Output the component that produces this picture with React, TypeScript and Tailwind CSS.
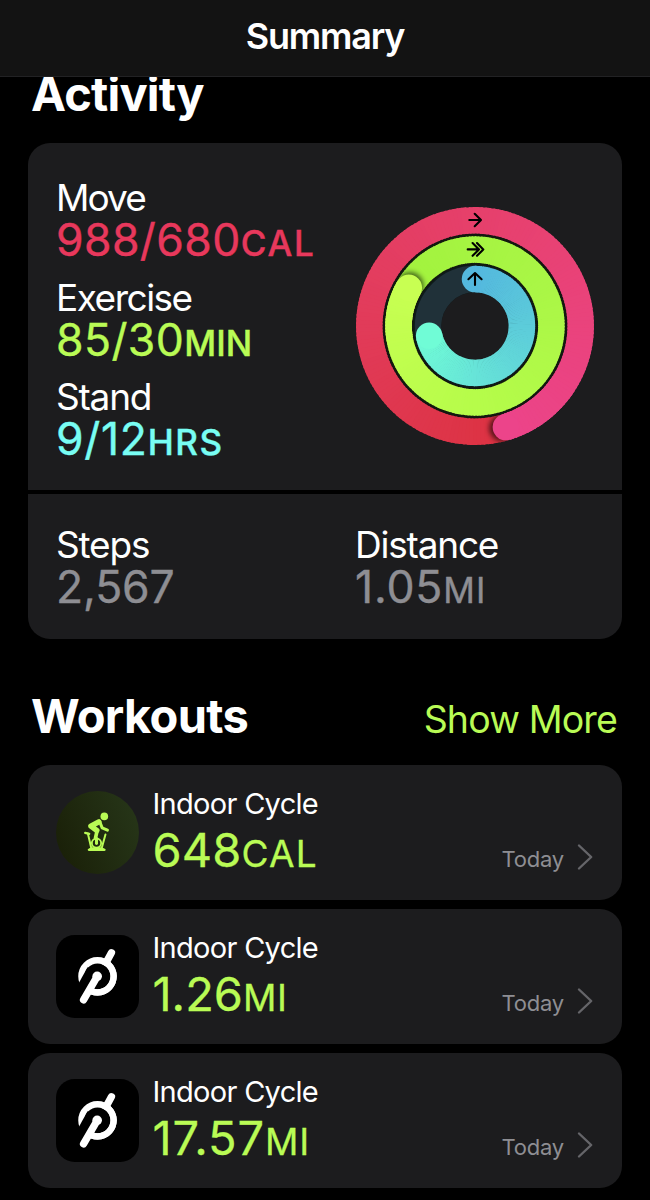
import React from "react";

const CARD = "bg-[#1c1c1e]";

type RGB = [number, number, number];

function point(radius: number, degrees: number): [number, number] {
  const a = (degrees * Math.PI) / 180;
  return [radius * Math.sin(a), -radius * Math.cos(a)];
}

function mix(stops: RGB[], t: number): string {
  const p = Math.min(Math.max(t, 0), 1) * (stops.length - 1);
  const i = Math.min(Math.floor(p), stops.length - 2);
  const f = p - i;
  const c = stops[i].map((v, k) => Math.round(v + (stops[i + 1][k] - v) * f));
  return `rgb(${c[0]},${c[1]},${c[2]})`;
}

interface RingProps {
  id: string;
  radius: number;
  from: number;
  sweep: number;
  stops: RGB[];
  roundStart?: boolean;
}

const WIDTH = 26.5;

function Ring({ id, radius, from, sweep, stops, roundStart }: RingProps) {
  const step = 2;
  const arcs = Array.from({ length: Math.round(sweep / step) }, (_, i) => {
    const a = from + i * step;
    const [x1, y1] = point(radius, a);
    const [x2, y2] = point(radius, a + step + (i * step + step < sweep ? 0.8 : 0));
    return (
      <path
        key={i}
        d={`M${x1} ${y1}A${radius} ${radius} 0 0 1 ${x2} ${y2}`}
        stroke={mix(stops, (i * step) / sweep)}
        strokeWidth={WIDTH}
        fill="none"
      />
    );
  });
  const [hx, hy] = point(radius, from + sweep);
  const [sx, sy] = point(radius, from + sweep + 2);
  const [tx, ty] = point(radius, from);
  const outer = radius + WIDTH / 2;
  const inner = radius - WIDTH / 2;
  return (
    <g>
      <clipPath id={id}>
        <path
          clipRule="evenodd"
          d={`M0 ${-outer}A${outer} ${outer} 0 1 1 0 ${outer}A${outer} ${outer} 0 1 1 0 ${-outer}ZM0 ${-inner}A${inner} ${inner} 0 1 1 0 ${inner}A${inner} ${inner} 0 1 1 0 ${-inner}Z`}
        />
      </clipPath>
      {roundStart && <circle cx={tx} cy={ty} r={WIDTH / 2} fill={mix(stops, 0)} />}
      {arcs}
      {!roundStart && (
        <g clipPath={`url(#${id})`}>
          <circle cx={sx} cy={sy} r={WIDTH / 2} fill="#000" opacity="0.6" filter="url(#soft)" />
        </g>
      )}
      {!roundStart && arcs.slice(-20)}
      <circle cx={hx} cy={hy} r={WIDTH / 2} fill={mix(stops, 1)} />
    </g>
  );
}

function Rings() {
  return (
    <svg viewBox="-120 -120 240 240" className="h-[240px] w-[240px]">
      <defs>
        <filter id="soft" x="-50%" y="-50%" width="200%" height="200%">
          <feGaussianBlur stdDeviation="2.6" />
        </filter>
      </defs>
      <circle r="95" fill="#191317" />
      <circle r="76.4" fill="none" stroke="#12190f" strokeWidth="31" />
      <circle r="47" fill="none" stroke="#0e1b1b" strokeWidth="29" />
      <circle r="46.9" fill="none" stroke="#203139" strokeWidth={WIDTH} />
      <circle r="33.7" fill="#1c1c1e" />
      <Ring id="move" radius={105.7} from={163} sweep={360} stops={[[220, 50, 66], [226, 60, 92], [232, 66, 116], [236, 68, 138]]} />
      <Ring id="exercise" radius={76.4} from={300} sweep={360} stops={[[162, 242, 62], [170, 246, 70], [182, 252, 74], [200, 255, 82]]} />
      <Ring id="stand" radius={46.9} from={0} sweep={258} roundStart stops={[[84, 184, 222], [92, 203, 218], [102, 226, 216], [112, 252, 214]]} />
      <g fill="none" stroke="#000" strokeWidth="2.1" strokeLinecap="round" strokeLinejoin="round">
        <path d="M-5.7-106H5.8M-.3-112.2L6-106L-.3-99.8" />
        <path d="M-7.3-76.6H4M-2.4-83L4-76.6L-2.4-70.2M2-83L8.3-76.6L2-70.2" />
        <path d="M0-41V-52.8M-6.6-46.8L0-53L6.6-46.8" />
      </g>
    </svg>
  );
}

interface MetricProps {
  label: string;
  value: string;
  unit?: string;
  color: string;
  labelSpacing: string;
  valueSpacing: string;
  unitStyle?: string;
}

function Metric({ label, value, unit, color, labelSpacing, valueSpacing, unitStyle = "" }: MetricProps) {
  return (
    <div className="whitespace-nowrap">
      <div className={`h-10 text-[37px] leading-[42px] text-white ${labelSpacing}`}>{label}</div>
      <div className={`flex h-[46px] items-baseline text-[44.5px] leading-[46px] [-webkit-text-stroke:0.4px_currentColor] ${color}`}>
        <span className={valueSpacing}>{value}</span>
        {unit && <span className={`text-[35px] leading-none ${unitStyle}`}>{unit}</span>}
      </div>
    </div>
  );
}

function CycleIcon() {
  return (
    <svg viewBox="107 93 250 250" className="h-[83px] w-[83px]">
      <defs>
        <linearGradient id="badge" x1="0" y1="0.7" x2="1" y2="0.3">
          <stop offset="0" stopColor="#1a2008" />
          <stop offset="1" stopColor="#263518" />
        </linearGradient>
      </defs>
      <circle cx="232" cy="218" r="125" fill="url(#badge)" />
      <g fill="none" stroke="#b9fb55" strokeLinecap="round" strokeLinejoin="round">
        <circle cx="252.5" cy="169.5" r="11.5" fill="#b9fb55" stroke="none" />
        <path d="M236 186L212 199L230 212" strokeWidth="16" />
        <path d="M239 186L246 204L262 211" strokeWidth="9" />
        <path d="M231 212L226 234" strokeWidth="11" />
        <path d="M195 219L207 222" strokeWidth="7" />
        <path d="M203 221L213 264M256 224L245 264" strokeWidth="6" />
        <circle cx="229" cy="250" r="14" strokeWidth="5.5" />
        <path d="M229 236V251" strokeWidth="9" />
        <path d="M206 270L215 266H243L253 270Z" strokeWidth="7" />
      </g>
    </svg>
  );
}

function PelotonIcon() {
  return (
    <svg viewBox="107 104.5 250 250" className="h-[83px] w-[83px]">
      <rect x="107" y="104.5" width="250" height="250" rx="56" fill="#000" />
      <circle cx="232" cy="229" r="48.5" fill="none" stroke="#fff" strokeWidth="19" />
      <path d="M172 256L202 202L231 215L190 300L165 290Z" fill="#000" />
      <path d="M258 187L274 158M190 300L226 238" stroke="#fff" strokeWidth="22" strokeLinecap="round" />
      <circle cx="231" cy="229" r="14.5" fill="#fff" />
      <circle cx="232" cy="229" r="48.5" fill="none" stroke="#fff" strokeWidth="19" strokeDasharray="152.4 152.4" transform="rotate(-70 232 229)" />
    </svg>
  );
}

interface WorkoutProps {
  icon: React.ReactNode;
  value: string;
  unit: string;
  valueSpacing: string;
  unitStyle: string;
}

function Workout({ icon, value, unit, valueSpacing, unitStyle }: WorkoutProps) {
  return (
    <div className={`flex h-[135px] rounded-[22px] ${CARD} pl-[27.5px] pr-[29px] pt-[26px]`}>
      {icon}
      <div className="ml-[14px] whitespace-nowrap">
        <div className="-mt-[5px] h-9 text-[29px] leading-[36px] tracking-[-0.7px] text-white">Indoor Cycle</div>
        <div className="mt-[4px] flex h-[48px] items-baseline text-[47px] leading-[48px] text-[#b9fb55] [-webkit-text-stroke:0.3px_currentColor]">
          <span className={valueSpacing}>{value}</span>
          <span className={`text-[37px] leading-none ${unitStyle}`}>{unit}</span>
        </div>
      </div>
      <div className="ml-auto mt-[53px] flex h-[30px] items-center text-[22px] leading-[30px] tracking-[-0.2px] text-[#8e8e93]">
        Today
        <svg viewBox="0 0 16 28" className="-mt-1 ml-[13px] h-7 w-4" fill="none" stroke="#656569" strokeWidth="2.4" strokeLinecap="round" strokeLinejoin="round">
          <path d="M2 2.5L14.2 14L2 25.5" />
        </svg>
      </div>
    </div>
  );
}

export default function App() {
  return (
    <div className="h-[1200px] w-[650px] overflow-hidden bg-black font-['Inter',sans-serif]">
      <header className="relative z-10 flex h-[77px] justify-center border-b border-[#222224] bg-[#131313]">
        <h1 className="text-[36px] font-semibold leading-[72px] tracking-[-1.2px] text-white">Summary</h1>
      </header>
      <main className="px-7">
        <h2 className="-mt-[8px] h-[56px] pl-[3px] text-[47px] font-bold leading-[50px] tracking-[-0.8px] text-white">Activity</h2>
        <section className="mt-[18px] overflow-hidden rounded-[22px]">
          <div className={`flex h-[347px] ${CARD} pl-[28px] pr-[27px] pt-[34px]`}>
            <div className="flex flex-col gap-[13.5px]">
              <Metric label="Move" value="988/680" unit="CAL" color="text-[#e8385c]" labelSpacing="tracking-[-1.9px]" valueSpacing="tracking-[0.4px]" unitStyle="font-medium tracking-[1.8px]" />
              <Metric label="Exercise" value="85/30" unit="MIN" color="text-[#b9fb55]" labelSpacing="tracking-[-1.5px]" valueSpacing="tracking-[0.4px]" unitStyle="font-medium tracking-[0.1px]" />
              <Metric label="Stand" value="9/12" unit="HRS" color="text-[#78fdf3]" labelSpacing="tracking-[-1.2px]" valueSpacing="tracking-[0.7px]" unitStyle="font-medium tracking-[1.6px]" />
            </div>
            <div className="ml-auto mt-[29px]">
              <Rings />
            </div>
          </div>
          <div className={`mt-1 grid h-[145px] grid-cols-2 ${CARD} pl-[28px] pt-[30px]`}>
            <Metric label="Steps" value="2,567" color="text-[#8e8e93]" labelSpacing="tracking-[-1.2px]" valueSpacing="tracking-[-0.1px]" />
            <div className="pl-4">
              <Metric label="Distance" value="1.05" unit="MI" color="text-[#8e8e93]" labelSpacing="tracking-[-1.2px]" valueSpacing="tracking-[0.8px]" unitStyle="tracking-[1.2px]" />
            </div>
          </div>
        </section>
        <div className="mt-[52px] flex h-[60px] justify-between pl-[3px] pr-[5px]">
          <h2 className="text-[47px] font-bold leading-[50px] tracking-[-0.7px] text-white">Workouts</h2>
          <span className="text-[37.5px] leading-[57px] tracking-[-0.85px] text-[#b9fb55]">Show More</span>
        </div>
        <div className="mt-[14px] flex flex-col gap-[9px]">
          <Workout icon={<CycleIcon />} value="648" unit="CAL" valueSpacing="tracking-[0.1px]" unitStyle="tracking-[1.3px]" />
          <Workout icon={<PelotonIcon />} value="1.26" unit="MI" valueSpacing="tracking-[0px]" unitStyle="tracking-[0.5px]" />
          <Workout icon={<PelotonIcon />} value="17.57" unit="MI" valueSpacing="tracking-[0.9px]" unitStyle="tracking-[1px]" />
        </div>
      </main>
    </div>
  );
}
